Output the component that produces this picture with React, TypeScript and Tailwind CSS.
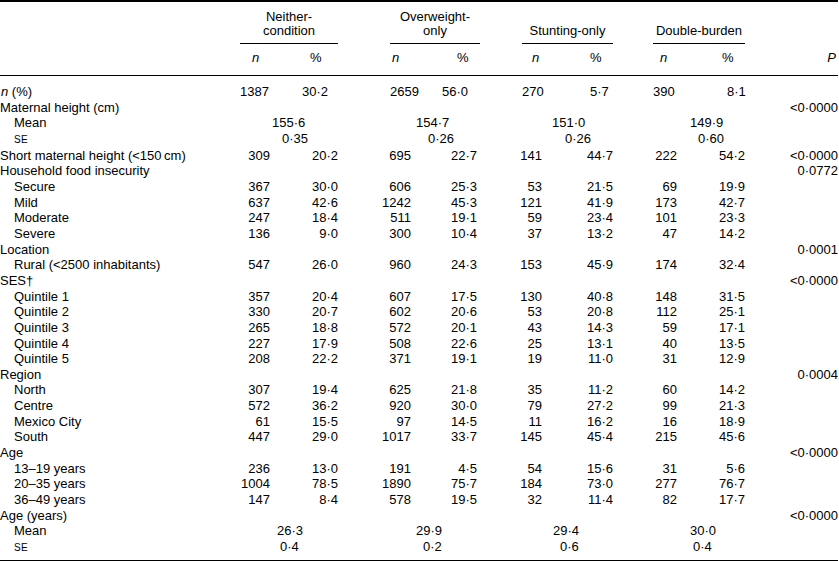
import React from "react";

type Row = {
  label: React.ReactNode;
  indent?: boolean;
  cells?: string[];
  span?: string[];
  spanPad?: string[];
  p?: string;
};

const COLS =
  "grid grid-cols-[228px_42px_68px_73px_66px_65px_71px_64px_68px_93px] whitespace-nowrap";

const Se = () => <span className="text-[10px] tracking-[0.03em]">SE</span>;

const meanPadA = ["pl-[44px]", "pl-[78px]", "pl-[75px]", "pl-[77px]"];
const sePadA = ["pl-[54px]", "pl-[90px]", "pl-[88px]", "pl-[85px]"];
const meanPadB = ["pl-[49px]", "pl-[78px]", "pl-[76px]", "pl-[77px]"];
const sePadB = ["pl-[52px]", "pl-[85px]", "pl-[83px]", "pl-[80px]"];

const rows: Row[] = [
  { label: "Maternal height (cm)", p: "<0·0000" },
  { label: "Mean", indent: true, span: ["155·6", "154·7", "151·0", "149·9"], spanPad: meanPadA },
  { label: <Se />, indent: true, span: ["0·35", "0·26", "0·26", "0·60"], spanPad: sePadA },
  {
    label: "Short maternal height (<150\u2009cm)",
    cells: ["309", "20·2", "695", "22·7", "141", "44·7", "222", "54·2"],
    p: "<0·0000",
  },
  { label: "Household food insecurity", p: "0·0772" },
  { label: "Secure", indent: true, cells: ["367", "30·0", "606", "25·3", "53", "21·5", "69", "19·9"] },
  { label: "Mild", indent: true, cells: ["637", "42·6", "1242", "45·3", "121", "41·9", "173", "42·7"] },
  { label: "Moderate", indent: true, cells: ["247", "18·4", "511", "19·1", "59", "23·4", "101", "23·3"] },
  { label: "Severe", indent: true, cells: ["136", "9·0", "300", "10·4", "37", "13·2", "47", "14·2"] },
  { label: "Location", p: "0·0001" },
  {
    label: "Rural (<2500 inhabitants)",
    indent: true,
    cells: ["547", "26·0", "960", "24·3", "153", "45·9", "174", "32·4"],
  },
  { label: "SES†", p: "<0·0000" },
  { label: "Quintile 1", indent: true, cells: ["357", "20·4", "607", "17·5", "130", "40·8", "148", "31·5"] },
  { label: "Quintile 2", indent: true, cells: ["330", "20·7", "602", "20·6", "53", "20·8", "112", "25·1"] },
  { label: "Quintile 3", indent: true, cells: ["265", "18·8", "572", "20·1", "43", "14·3", "59", "17·1"] },
  { label: "Quintile 4", indent: true, cells: ["227", "17·9", "508", "22·6", "25", "13·1", "40", "13·5"] },
  { label: "Quintile 5", indent: true, cells: ["208", "22·2", "371", "19·1", "19", "11·0", "31", "12·9"] },
  { label: "Region", p: "0·0004" },
  { label: "North", indent: true, cells: ["307", "19·4", "625", "21·8", "35", "11·2", "60", "14·2"] },
  { label: "Centre", indent: true, cells: ["572", "36·2", "920", "30·0", "79", "27·2", "99", "21·3"] },
  { label: "Mexico City", indent: true, cells: ["61", "15·5", "97", "14·5", "11", "16·2", "16", "18·9"] },
  { label: "South", indent: true, cells: ["447", "29·0", "1017", "33·7", "145", "45·4", "215", "45·6"] },
  { label: "Age", p: "<0·0000" },
  { label: "13–19 years", indent: true, cells: ["236", "13·0", "191", "4·5", "54", "15·6", "31", "5·6"] },
  { label: "20–35 years", indent: true, cells: ["1004", "78·5", "1890", "75·7", "184", "73·0", "277", "76·7"] },
  { label: "36–49 years", indent: true, cells: ["147", "8·4", "578", "19·5", "32", "11·4", "82", "17·7"] },
  { label: "Age (years)", p: "<0·0000" },
  { label: "Mean", indent: true, span: ["26·3", "29·9", "29·4", "30·0"], spanPad: meanPadB },
  { label: <Se />, indent: true, span: ["0·4", "0·2", "0·6", "0·4"], spanPad: sePadB },
];

const groups = [
  { title: ["Neither-", "condition"], line: "ml-[12px]" },
  { title: ["Overweight-", "only"], line: "ml-[52px] -mr-[3px]" },
  { title: ["Stunting-only"], line: "ml-[45px]" },
  { title: ["Double-burden"], line: "ml-[40px]" },
];

const headPad = ["pl-[24px]", "pl-[40px]", "pl-[54px]", "pl-[46px]", "pl-[55px]", "pl-[48px]", "pl-[47px]", "pl-[45px]"];
const firstRow = ["1387", "30·2", "2659", "56·0", "270", "5·7", "390", "8·1"];
const firstPad = ["pl-[12px]", "pl-[32px]", "pl-[52px]", "pl-[31px]", "pl-[45px]", "pl-[48px]", "pl-[40px]", "pl-[50px]"];

export default function App() {
  return (
    <div className="h-[561px] w-[839px] bg-white pr-[1px] font-['Liberation_Sans',Arial,sans-serif] text-[13px] text-black">
      {/* header */}
      <div className="border-t-2 border-b border-black pb-[10px]">
        <div className={`${COLS} pt-[8px] leading-[14px]`}>
          <div />
          {groups.map((g) => (
            <div key={g.title[0]} className="col-span-2 flex flex-col justify-end">
              <div className={`border-b border-black pb-[5px] text-center ${g.line}`}>
                {g.title.map((t) => (
                  <div key={t}>{t}</div>
                ))}
              </div>
            </div>
          ))}
          <div />
        </div>
        <div className={`${COLS} mt-[7px] leading-[14px]`}>
          <div />
          {headPad.map((pad, i) => (
            <div key={i} className={pad}>
              {i % 2 === 0 ? <i>n</i> : "%"}
            </div>
          ))}
          <div className="pr-[2px] text-right">
            <i>P</i>
          </div>
        </div>
      </div>

      {/* body */}
      <div className="border-b-2 border-black pt-[8px] pb-[4px] leading-[15.65px]">
        <div className={COLS}>
          <div className="pl-[1px]">
            <i>n</i> (%)
          </div>
          {firstRow.map((v, i) => (
            <div key={i} className={firstPad[i]}>
              {v}
            </div>
          ))}
          <div />
        </div>
        {rows.map((r, ri) => (
          <div key={ri} className={COLS}>
            <div className={r.indent ? "pl-[14px]" : ""}>{r.label}</div>
            {r.cells &&
              r.cells.map((v, i) => (
                <div key={i} className="text-right">
                  {v}
                </div>
              ))}
            {r.span &&
              r.span.map((v, i) => (
                <div key={i} className={`col-span-2 ${r.spanPad![i]}`}>
                  {v}
                </div>
              ))}
            {!r.cells && !r.span && <div className="col-span-8" />}
            <div className="text-right">{r.p ?? null}</div>
          </div>
        ))}
      </div>
    </div>
  );
}
